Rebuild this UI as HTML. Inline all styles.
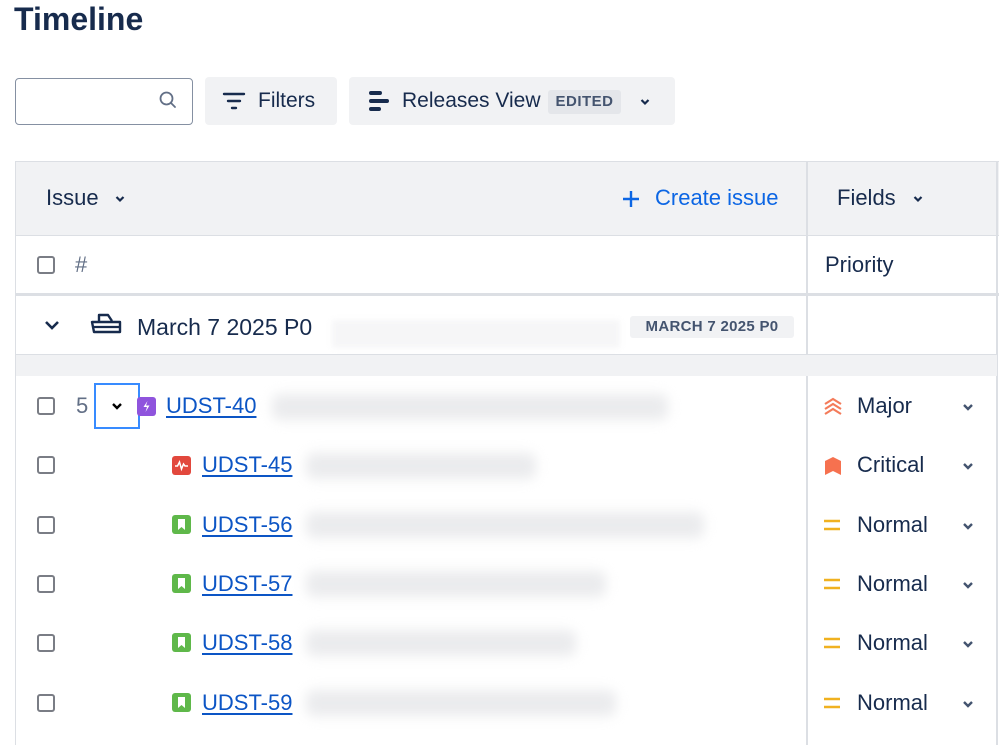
<!DOCTYPE html>
<html><head><style>
*{margin:0;padding:0;box-sizing:border-box}
body{width:999px;height:745px;background:#fff;font-family:"Liberation Sans",sans-serif;color:#172b4d;position:relative;overflow:hidden}
.a{position:absolute}
.t{font-size:22px;line-height:24px;white-space:nowrap}
.tb{font-size:21px}
.cb{position:absolute;left:37px;width:18px;height:18px;border:2px solid #7a7d85;border-radius:3px;background:#fff}
.lk{color:#0c55c5;text-decoration:underline;text-underline-offset:3px}
.blur{position:absolute;height:26px;background:#e2e3e6;border-radius:8px;filter:blur(6px);opacity:.7}
.chev{position:absolute;width:10px;height:10px}
.ic{position:absolute;width:19px;height:19px;border-radius:3px}
</style></head><body>
<div class="a" style="left:14px;top:0;font-size:32px;font-weight:bold;line-height:38px;color:#172b4d">Timeline</div>

<div class="a" style="left:15px;top:78px;width:178px;height:47px;border:1.5px solid #8590a2;border-radius:4px"></div>
<svg class="a" style="left:158px;top:90px" width="20" height="20" viewBox="0 0 20 20"><circle cx="8.5" cy="8.5" r="6" fill="none" stroke="#626f86" stroke-width="1.8"/><path d="M13 13l4 4" stroke="#626f86" stroke-width="1.8" stroke-linecap="round"/></svg>

<div class="a" style="left:205px;top:77px;width:132px;height:48px;background:#f1f2f4;border-radius:4px"></div>
<svg class="a" style="left:222px;top:91px" width="24" height="20" viewBox="0 0 24 20"><path d="M2 3h20M6 10h12M10 17h4" stroke="#172b4d" stroke-width="2.4" stroke-linecap="round"/></svg>
<div class="a t tb" style="left:258px;top:89px">Filters</div>

<div class="a" style="left:349px;top:77px;width:326px;height:48px;background:#f1f2f4;border-radius:4px"></div>
<svg class="a" style="left:367px;top:89px" width="24" height="24" viewBox="0 0 24 24"><path d="M4 4h9M4 12h16M4 20h8" stroke="#172b4d" stroke-width="4" stroke-linecap="round"/></svg>
<div class="a t tb" style="left:402px;top:89px">Releases View</div>
<div class="a" style="left:548px;top:90px;width:73px;height:24px;background:#e4e6ea;border-radius:3px;font-size:15px;font-weight:bold;color:#44546f;line-height:24px;text-align:center;letter-spacing:.5px">EDITED</div>
<svg class="chev" style="left:640px;top:97px" viewBox="0 0 10 10"><path d="M1.5 3l3.5 3.5L8.5 3" fill="none" stroke="#172b4d" stroke-width="2.2"/></svg>

<!-- table -->
<div class="a" style="left:15px;top:161px;width:984px;height:75px;background:#f1f2f4;border:1px solid #dcdfe4;border-right:none"></div>
<div class="a" style="left:15px;top:161px;width:1px;height:584px;background:#dcdfe4"></div>
<div class="a" style="left:806px;top:161px;width:2px;height:584px;background:#dcdfe4"></div>
<div class="a" style="left:996px;top:161px;width:2px;height:584px;background:#dcdfe4"></div>
<div class="a t" style="left:46px;top:186px">Issue</div>
<svg class="chev" style="left:115px;top:194px" viewBox="0 0 10 10"><path d="M1.5 3l3.5 3.5L8.5 3" fill="none" stroke="#172b4d" stroke-width="2.2"/></svg>
<svg class="a" style="left:621px;top:189px" width="20" height="20" viewBox="0 0 20 20"><path d="M10 2v16M2 10h16" stroke="#0c66e4" stroke-width="2.4"/></svg>
<div class="a t" style="left:655px;top:186px;color:#0c66e4">Create issue</div>
<div class="a t" style="left:837px;top:186px">Fields</div>
<svg class="chev" style="left:913px;top:194px" viewBox="0 0 10 10"><path d="M1.5 3l3.5 3.5L8.5 3" fill="none" stroke="#172b4d" stroke-width="2.2"/></svg>

<div class="cb" style="top:256px"></div>
<div class="a t" style="left:75px;top:253px;color:#626f86">#</div>
<div class="a t" style="left:825px;top:253px">Priority</div>
<div class="a" style="left:15px;top:293px;width:984px;height:3px;background:#dcdfe4"></div>

<!-- release row -->
<svg class="chev" style="left:44px;top:319px;width:16px;height:12px" viewBox="0 0 16 12"><path d="M2 3l6 6 6-6" fill="none" stroke="#172b4d" stroke-width="2.6"/></svg>
<svg class="a" style="left:90px;top:311px" width="32" height="24" viewBox="0 0 32 24"><path d="M9 10V4h9l4 6" fill="none" stroke="#172b4d" stroke-width="2.4" stroke-linejoin="round"/><path d="M2 11h28v10H4z" fill="none" stroke="#172b4d" stroke-width="2.4" stroke-linejoin="round"/><path d="M3 16h26" stroke="#172b4d" stroke-width="2.2"/></svg>
<div class="a t" style="left:137px;top:314px;font-size:23px;line-height:26px">March 7 2025 P0</div>
<div class="a" style="left:332px;top:320px;width:288px;height:28px;background:#f6f6f7;filter:blur(3px)"></div>
<div class="a" style="left:630px;top:316px;width:164px;height:22px;background:#f1f2f4;border-radius:3px;font-size:15px;font-weight:bold;color:#44546f;line-height:22px;text-align:center;letter-spacing:.3px">MARCH 7 2025 P0</div>
<div class="a" style="left:16px;top:354px;width:981px;height:22px;background:#f1f2f4;border-top:1px solid #dcdfe4"></div>

<!-- rows -->
<div class="cb" style="top:397px"></div>
<div class="a t" style="left:76px;top:394px;color:#626f86">5</div>
<div class="a" style="left:94px;top:383px;width:46px;height:46px;border:2px solid #388bff"></div>
<svg class="chev" style="left:111px;top:401px;width:12px;height:10px" viewBox="0 0 12 10"><path d="M2 3l4 4 4-4" fill="none" stroke="#000" stroke-width="2.4"/></svg>
<div class="ic" style="left:137px;top:397px;background:#8f54dd"></div>
<svg class="a" style="left:137px;top:397px" width="19" height="19" viewBox="0 0 19 19"><path d="M10.5 4L6.5 10h3.5l-1.5 5 4-6.5H9z" fill="#fff"/></svg>
<div class="a t lk" style="left:166px;top:394px">UDST-40</div>
<div class="blur" style="left:272px;top:394px;width:396px"></div>

<div class="cb" style="top:456px"></div>
<div class="ic" style="left:172px;top:456px;background:#e2483d"></div>
<svg class="a" style="left:172px;top:456px" width="19" height="19" viewBox="0 0 19 19"><path d="M3 10h2.5l2-4 2 7 2-5 1.5 2H16" fill="none" stroke="#fff" stroke-width="1.5"/></svg>
<div class="a t lk" style="left:202px;top:453px">UDST-45</div>
<div class="blur" style="left:306px;top:453px;width:230px"></div>

<div class="cb" style="top:516px"></div>
<div class="ic" style="left:172px;top:515px;background:#5fb84a"></div>
<svg class="a" style="left:172px;top:515px" width="19" height="19" viewBox="0 0 19 19"><path d="M6 4h7v11l-3.5-3L6 15z" fill="#fff"/></svg>
<div class="a t lk" style="left:202px;top:513px">UDST-56</div>
<div class="blur" style="left:306px;top:512px;width:398px"></div>

<div class="cb" style="top:575px"></div>
<div class="ic" style="left:172px;top:574px;background:#5fb84a"></div>
<svg class="a" style="left:172px;top:574px" width="19" height="19" viewBox="0 0 19 19"><path d="M6 4h7v11l-3.5-3L6 15z" fill="#fff"/></svg>
<div class="a t lk" style="left:202px;top:572px">UDST-57</div>
<div class="blur" style="left:306px;top:571px;width:300px"></div>

<div class="cb" style="top:634px"></div>
<div class="ic" style="left:172px;top:633px;background:#5fb84a"></div>
<svg class="a" style="left:172px;top:633px" width="19" height="19" viewBox="0 0 19 19"><path d="M6 4h7v11l-3.5-3L6 15z" fill="#fff"/></svg>
<div class="a t lk" style="left:202px;top:631px">UDST-58</div>
<div class="blur" style="left:306px;top:630px;width:270px"></div>

<div class="cb" style="top:694px"></div>
<div class="ic" style="left:172px;top:693px;background:#5fb84a"></div>
<svg class="a" style="left:172px;top:693px" width="19" height="19" viewBox="0 0 19 19"><path d="M6 4h7v11l-3.5-3L6 15z" fill="#fff"/></svg>
<div class="a t lk" style="left:202px;top:691px">UDST-59</div>
<div class="blur" style="left:306px;top:690px;width:310px"></div>

<!-- priorities -->
<svg class="a" style="left:822px;top:396px" width="22" height="22" viewBox="0 0 22 22"><path d="M3 8l8-5 8 5M3 13l8-5 8 5M3 18l8-5 8 5" fill="none" stroke="#f47b5a" stroke-width="2.2"/></svg>
<div class="a t" style="left:857px;top:394px">Major</div>
<svg class="a" style="left:823px;top:456px" width="20" height="20" viewBox="0 0 20 20"><path d="M2 5l8-4 8 4v14l-8-4-8 4z" fill="#f6714f"/></svg>
<div class="a t" style="left:857px;top:453px">Critical</div>
<svg class="a" style="left:822px;top:515px" width="20" height="20" viewBox="0 0 20 20"><path d="M2 6h16M2 14h16" stroke="#f0b120" stroke-width="2.6"/></svg>
<div class="a t" style="left:857px;top:513px">Normal</div>
<svg class="a" style="left:822px;top:574px" width="20" height="20" viewBox="0 0 20 20"><path d="M2 6h16M2 14h16" stroke="#f0b120" stroke-width="2.6"/></svg>
<div class="a t" style="left:857px;top:572px">Normal</div>
<svg class="a" style="left:822px;top:633px" width="20" height="20" viewBox="0 0 20 20"><path d="M2 6h16M2 14h16" stroke="#f0b120" stroke-width="2.6"/></svg>
<div class="a t" style="left:857px;top:631px">Normal</div>
<svg class="a" style="left:822px;top:693px" width="20" height="20" viewBox="0 0 20 20"><path d="M2 6h16M2 14h16" stroke="#f0b120" stroke-width="2.6"/></svg>
<div class="a t" style="left:857px;top:691px">Normal</div>

<svg class="chev" style="left:962px;top:402px;width:12px" viewBox="0 0 12 10"><path d="M2 3l4 4 4-4" fill="none" stroke="#44546f" stroke-width="2.4"/></svg>
<svg class="chev" style="left:962px;top:461px;width:12px" viewBox="0 0 12 10"><path d="M2 3l4 4 4-4" fill="none" stroke="#44546f" stroke-width="2.4"/></svg>
<svg class="chev" style="left:962px;top:521px;width:12px" viewBox="0 0 12 10"><path d="M2 3l4 4 4-4" fill="none" stroke="#44546f" stroke-width="2.4"/></svg>
<svg class="chev" style="left:962px;top:580px;width:12px" viewBox="0 0 12 10"><path d="M2 3l4 4 4-4" fill="none" stroke="#44546f" stroke-width="2.4"/></svg>
<svg class="chev" style="left:962px;top:639px;width:12px" viewBox="0 0 12 10"><path d="M2 3l4 4 4-4" fill="none" stroke="#44546f" stroke-width="2.4"/></svg>
<svg class="chev" style="left:962px;top:699px;width:12px" viewBox="0 0 12 10"><path d="M2 3l4 4 4-4" fill="none" stroke="#44546f" stroke-width="2.4"/></svg>
</body></html>
